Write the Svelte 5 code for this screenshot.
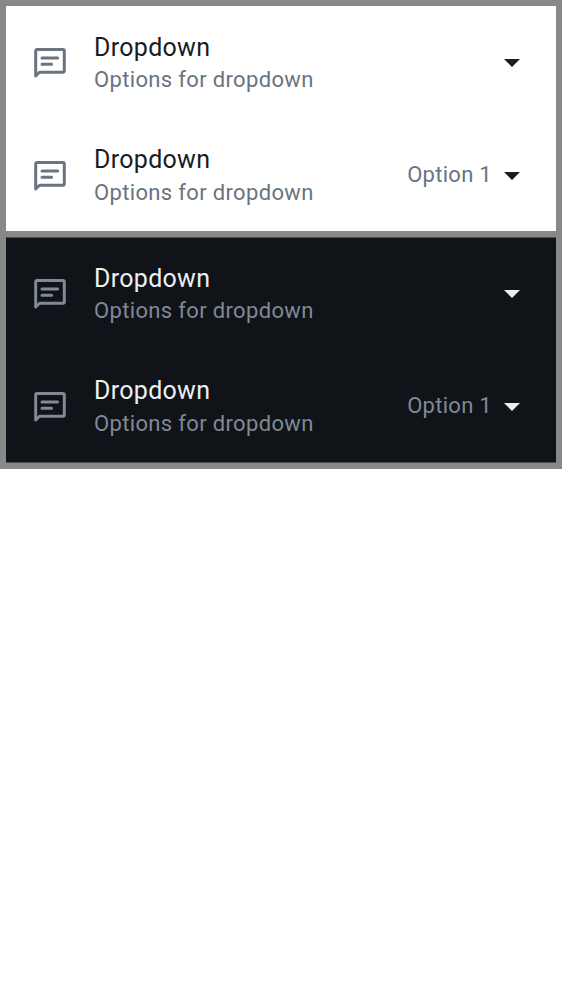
<script>
  const themes = ['light', 'dark'];
  const rows = [{ value: '' }, { value: 'Option 1' }];
</script>

<main>
  {#each themes as theme}
    <section class={theme}>
      {#each rows as row}
        <div class="row">
          <svg class="icon" viewBox="0 0 32 32" fill="none" stroke="currentColor" stroke-width="3" stroke-linejoin="round">
            <path d="M1.7 29V4.1Q1.7 2.6 3.2 2.6H28.8Q30.3 2.6 30.3 4.1V23.7Q30.3 25.2 28.8 25.2H5.5Z" />
            <path d="M8 11H23.6M8 17.2H17.6" stroke-linecap="round" />
          </svg>
          <div class="copy">
            <div class="title">Dropdown</div>
            <div class="summary">Options for dropdown</div>
          </div>
          {#if row.value}<span class="value">{row.value}</span>{/if}
          <svg class="arrow" viewBox="0 0 16 8"><path d="M0 0H16L8 8Z" fill="currentColor" /></svg>
        </div>
      {/each}
    </section>
  {/each}
</main>

<style>
  :global(body) { margin: 0; background: #fff; }
  main {
    box-sizing: border-box;
    height: 469px;
    padding: 6px;
    display: flex;
    flex-direction: column;
    gap: 6px;
    background: #888;
    font-family: Roboto, sans-serif;
  }
  section { box-sizing: border-box; height: 225px; }
  .light { background: #fff; color: #1b1b22; --muted: #687480; }
  .dark {
    height: 226px;
    border: solid #4c4e50;
    border-width: 1px 0;
    background: #101418;
    color: #eceff4;
    --muted: #808994;
  }
  .row {
    box-sizing: border-box;
    height: 112.5px;
    padding: 2px 36px 0 28px;
    display: flex;
    align-items: center;
  }
  .dark .row { padding-top: 0; }
  .icon { width: 32px; height: 32px; margin-right: 28px; color: var(--muted); }
  .copy { flex: 1; }
  .title { font-size: 25px; line-height: 33px; letter-spacing: 0.3px; padding-top: 0.35px; margin-bottom: -0.35px; }
  .summary { font-size: 22px; line-height: 33px; letter-spacing: 0.34px; color: var(--muted); }
  .value { font-size: 22px; line-height: 33px; letter-spacing: 0.28px; margin: 0 12px 2px 0; color: var(--muted); }
  .arrow { width: 16px; height: 8px; }
</style>
